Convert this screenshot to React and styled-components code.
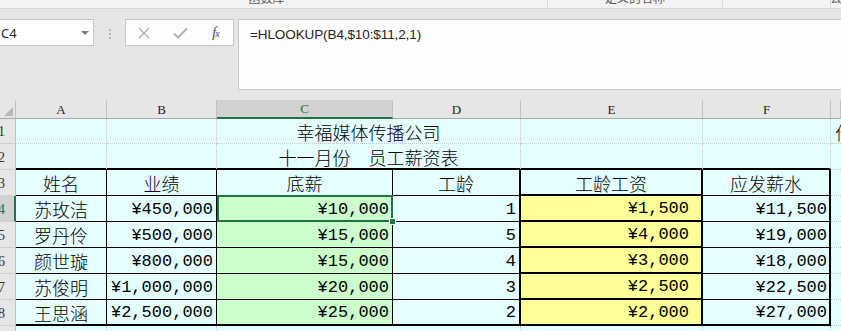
import React from 'react';
import styled, { createGlobalStyle } from 'styled-components';

const GlobalStyle = createGlobalStyle`
  html, body { margin: 0; padding: 0; }
  body {
    width: 841px;
    height: 331px;
    overflow: hidden;
    background: #e6e6e6;
    font-family: "Noto Sans", "Noto Sans CJK SC", sans-serif;
  }
`;

const DOT = '1px dotted #c4c4c4';
const THIN = '1px solid #000';
const MED = '2px solid #000';
const GREEN = '#217346';

const fills = { cyan: '#e5ffff', green: '#ccffcc', yellow: '#ffff99' };

const Window = styled.div`
  width: 841px;
  height: 331px;
  overflow: hidden;
  display: flex;
  flex-direction: column;
  background: #e6e6e6;
`;

const RibbonEdge = styled.div`
  height: 8px;
  flex: none;
  display: flex;
  background: #f3f3f3;
  border-bottom: 1px solid #d6d6d6;
  overflow: hidden;
`;

const RibbonGroup = styled.div`
  flex: none;
  width: ${p => p.$w}px;
  box-sizing: border-box;
  height: 8px;
  display: flex;
  justify-content: center;
  padding-right: ${p => p.$pr || 0}px;
  border-right: ${p => (p.$last ? 'none' : '1px solid #d9d9d9')};
  overflow: hidden;
`;

const GroupLabel = styled.span`
  font-family: "Noto Sans CJK SC", sans-serif;
  font-size: 12px;
  line-height: 12px;
  margin-top: -8px;
  color: #5a5a5a;
  white-space: nowrap;
`;

const FormulaRow = styled.div`
  height: 91px;
  flex: none;
  box-sizing: border-box;
  padding-top: 10px;
  display: flex;
  align-items: flex-start;
`;

const NameBox = styled.div`
  flex: none;
  margin-left: -10px;
  width: 104px;
  height: 27px;
  box-sizing: border-box;
  background: #fff;
  border: 1px solid #c6c6c6;
  display: flex;
  align-items: center;
  padding-left: 10px;
  padding-top: 1px;
  font-size: 13px;
  color: #262626;
`;

const Caret = styled.span`
  margin-left: auto;
  margin-right: 4px;
  width: 0;
  height: 0;
  border-left: 4px solid transparent;
  border-right: 4px solid transparent;
  border-top: 4px solid #7a7a7a;
`;

const Grip = styled.div`
  flex: none;
  width: 31px;
  height: 27px;
  display: flex;
  flex-direction: column;
  align-items: center;
  justify-content: center;
  gap: 2px;
  padding-top: 2px;
  box-sizing: border-box;
`;

const GripDot = styled.span`
  width: 2px;
  height: 2px;
  background: #b4b4b4;
`;

const ButtonBox = styled.div`
  flex: none;
  width: 109px;
  height: 27px;
  box-sizing: border-box;
  background: #fdfdfd;
  border: 1px solid #c6c6c6;
  display: grid;
  grid-template-columns: 36px 36px 35px;
  align-items: center;
  justify-items: center;
  padding-top: 1px;
`;

const Fx = styled.span`
  font-family: "Liberation Serif", serif;
  font-style: italic;
  font-size: 14px;
  color: #4a4a4a;
  letter-spacing: -1px;
  & small { font-size: 10px; }
`;

const FormulaInput = styled.div`
  flex: 1;
  margin-left: 4px;
  height: 71px;
  box-sizing: border-box;
  background: #fefefe;
  border: 1px solid #c6c6c6;
  border-right: none;
  padding: 7px 0 0 11px;
  font-family: "Liberation Sans", sans-serif;
  font-size: 13.5px;
  line-height: 16px;
  color: #222;
  letter-spacing: -0.1px;
`;

const Sheet = styled.div`
  flex: none;
  display: grid;
  grid-template-columns: 16px 91px 110px 176px 128px 182px 128px 10px;
  grid-template-rows: 19px 25px repeat(8, 26px);
  overflow: hidden;
`;

const Corner = styled.div`
  position: relative;
  box-sizing: border-box;
  background: #e6e6e6;
  border-right: 1px solid #c0c0c0;
  border-bottom: 1px solid #a8a8a8;
  &::after {
    content: '';
    position: absolute;
    right: 2px;
    bottom: 2px;
    width: 9px;
    height: 9px;
    background: #b9b9b9;
    clip-path: polygon(100% 0, 100% 100%, 0 100%);
  }
`;

const ColHead = styled.div`
  box-sizing: border-box;
  background: ${p => (p.$active ? '#d2d2d2' : '#e6e6e6')};
  border-right: 1px solid #c0c0c0;
  border-bottom: ${p => (p.$active ? `2px solid ${GREEN}` : '1px solid #a8a8a8')};
  color: ${p => (p.$active ? GREEN : '#222')};
  font-family: "Liberation Serif", serif;
  font-size: 13px;
  display: flex;
  align-items: center;
  justify-content: center;
  padding-top: 1px;
  overflow: hidden;
`;

const RowHead = styled.div`
  box-sizing: border-box;
  background: ${p => (p.$active ? '#d2d2d2' : '#e6e6e6')};
  border-right: ${p => (p.$active ? `2px solid ${GREEN}` : '1px solid #c0c0c0')};
  border-bottom: 1px solid #d0d0d0;
  color: ${p => (p.$active ? GREEN : '#333')};
  font-family: "Liberation Serif", serif;
  font-size: 14px;
  display: flex;
  align-items: center;
  padding-top: 2px;
  overflow: hidden;
  & span { margin-left: -2px; }
`;

const Cell = styled.div`
  box-sizing: border-box;
  position: relative;
  grid-column: ${p => (p.$span ? `span ${p.$span}` : 'auto')};
  background: ${p => fills[p.$fill || 'cyan']};
  border-right: ${p => p.$r || 'none'};
  border-bottom: ${p => p.$b || 'none'};
  display: flex;
  align-items: center;
  justify-content: ${p => (p.$align === 'right' ? 'flex-end' : p.$align === 'left' ? 'flex-start' : 'center')};
  padding-right: ${p => (p.$align === 'right' ? p.$pr ?? 3 : 0)}px;
  padding-left: ${p => (p.$align === 'left' ? 4 : 0)}px;
  padding-top: 1px;
  overflow: ${p => (p.$sel ? 'visible' : 'hidden')};
  z-index: ${p => (p.$sel ? 2 : 'auto')};
  white-space: nowrap;
  color: #000;
  font-family: ${p => (p.$num ? '"Liberation Mono", monospace' : '"Noto Sans CJK SC", sans-serif')};
  font-size: ${p => (p.$num ? 17 : 18)}px;
  font-weight: ${p => (p.$num ? 400 : 300)};
  line-height: 1;
`;

const Selection = styled.div`
  position: absolute;
  top: -1px;
  left: 0;
  right: -1px;
  bottom: -1px;
  border: 2px solid ${GREEN};
  pointer-events: none;
  &::after {
    content: '';
    position: absolute;
    right: -5px;
    bottom: -5px;
    width: 5px;
    height: 5px;
    background: ${GREEN};
    border: 1px solid #fff;
  }
`;

const CrossIcon = () => (
  <svg width="12" height="12" viewBox="0 0 12 12">
    <path d="M1 1L11 11M11 1L1 11" stroke="#a9a9a9" strokeWidth="1.3" fill="none" />
  </svg>
);

const CheckIcon = () => (
  <svg width="15" height="12" viewBox="0 0 15 12">
    <path d="M1 6.5L5 10.5L14 1.5" stroke="#b3b3b3" strokeWidth="2" fill="none" />
  </svg>
);

const data = [
  ['苏玫洁', '¥450,000', '¥10,000', '1', '¥1,500', '¥11,500'],
  ['罗丹伶', '¥500,000', '¥15,000', '5', '¥4,000', '¥19,000'],
  ['颜世璇', '¥800,000', '¥15,000', '4', '¥3,000', '¥18,000'],
  ['苏俊明', '¥1,000,000', '¥20,000', '3', '¥2,500', '¥22,500'],
  ['王思涵', '¥2,500,000', '¥25,000', '2', '¥2,000', '¥27,000'],
];

const headers = ['姓名', '业绩', '底薪', '工龄', '工龄工资', '应发薪水'];

// right border per column A..F of the bordered block
const colRight = [THIN, THIN, THIN, MED, MED, MED];

const TableRow = ({ n, cells, header, last, active }) => (
  <>
    <RowHead $active={active}><span>{n}</span></RowHead>
    {cells.map((v, i) => {
      const bottom = last ? MED : i === 4 ? MED : THIN;
      const fill = header ? 'cyan' : i === 2 ? 'green' : i === 4 ? 'yellow' : 'cyan';
      const num = !header && i > 0;
      return (
        <Cell
          key={i}
          $r={colRight[i]}
          $b={bottom}
          $fill={fill}
          $num={num}
          $align={num ? 'right' : 'center'}
          $pr={i === 4 ? 12 : i === 5 ? 2 : 3}
          $sel={active && i === 2}
        >
          {v}
          {active && i === 2 && <Selection />}
        </Cell>
      );
    })}
    <Cell $b={DOT} />
  </>
);

export default function App() {
  return (
    <Window>
      <GlobalStyle />
      <RibbonEdge>
        <RibbonGroup $w={548} $pr={14}><GroupLabel>函数库</GroupLabel></RibbonGroup>
        <RibbonGroup $w={175}><GroupLabel>定义的名称</GroupLabel></RibbonGroup>
        <RibbonGroup $w={108} />
        <RibbonGroup $w={10} $last><GroupLabel>公</GroupLabel></RibbonGroup>
      </RibbonEdge>

      <FormulaRow>
        <NameBox>
          C4
          <Caret />
        </NameBox>
        <Grip>
          <GripDot />
          <GripDot />
          <GripDot />
        </Grip>
        <ButtonBox>
          <CrossIcon />
          <CheckIcon />
          <Fx>f<small>x</small></Fx>
        </ButtonBox>
        <FormulaInput>=HLOOKUP(B4,$10:$11,2,1)</FormulaInput>
      </FormulaRow>

      <Sheet>
        <Corner />
        {['A', 'B', 'C', 'D', 'E', 'F', ''].map((c, i) => (
          <ColHead key={i} $active={c === 'C'}>{c}</ColHead>
        ))}

        <RowHead><span>1</span></RowHead>
        <Cell $r={DOT} $b={DOT} />
        <Cell $r={DOT} $b={DOT} />
        <Cell $span={2} $r={DOT} $b={DOT}>幸福媒体传播公司</Cell>
        <Cell $r={DOT} $b={DOT} />
        <Cell $r={DOT} $b={DOT} />
        <Cell $b={DOT} $align="left">作</Cell>

        <RowHead><span>2</span></RowHead>
        <Cell $r={DOT} $b={MED} />
        <Cell $r={DOT} $b={MED} />
        <Cell $span={2} $r={DOT} $b={MED}>十一月份　员工薪资表</Cell>
        <Cell $r={DOT} $b={MED} />
        <Cell $r={DOT} $b={MED} />
        <Cell $b={DOT} />

        <TableRow n={3} cells={headers} header />
        {data.map((r, i) => (
          <TableRow key={i} n={i + 4} cells={r} active={i === 0} last={i === data.length - 1} />
        ))}

        <RowHead><span>9</span></RowHead>
        {[0, 1, 2, 3, 4, 5].map(i => (
          <Cell key={i} $r={i === 2 ? 'none' : DOT} />
        ))}
        <Cell />
      </Sheet>
    </Window>
  );
}
